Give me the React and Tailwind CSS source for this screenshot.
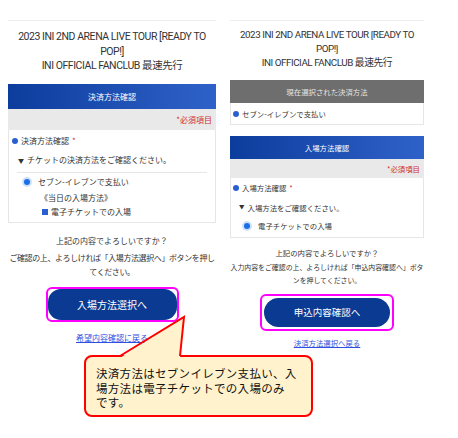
const jp = { fontFamily: '"Noto Sans CJK JP", "Noto Sans", sans-serif' };

const Dot = ({ size = "w-[6px] h-[6px]" }) => (
  <span className={`inline-block ${size} rounded-full bg-[#2a5fd0] shrink-0`} />
);

const Radio = () => (
  <span className="flex items-center justify-center w-[10px] h-[10px] rounded-full bg-[#cfe1fa] shrink-0">
    <span className="w-[6px] h-[6px] rounded-full bg-[#1a6fe6]" />
  </span>
);

const Title = ({ className }) => (
  <div
    className={`text-center text-[#333] ${className}`}
    style={{ fontFamily: 'Roboto, "Noto Sans CJK JP", sans-serif' }}
  >
    <div>2023 INI 2ND ARENA LIVE TOUR [READY TO</div>
    <div>POP!]</div>
    <div>INI OFFICIAL FANCLUB 最速先行</div>
  </div>
);

const BlueHeader = ({ label, className }) => (
  <div
    className={`flex items-center justify-center bg-gradient-to-r from-[#0c3c9c] to-[#2f62c9] text-white ${className}`}
  >
    {label}
  </div>
);

const LeftColumn = () => (
  <div className="ml-[8px] w-[208px] pt-[20px] text-[8px] text-[#333]" style={jp}>
    <div className="h-px bg-[#eeeeee]" />
    <Title className="h-[63px] pt-[9px] text-[10.5px] leading-[14.5px] tracking-[-0.45px]" />
    <BlueHeader label="決済方法確認" className="h-[25px] text-[8px]" />
    <div className="h-[21px] bg-[#e9e9e9] flex items-center justify-end pr-[4px] text-[#d0302c]">
      *必須項目
    </div>
    <div className="border-x border-b border-[#e6e6e6] pb-[3px]">
      <div className="h-[22px] flex items-center gap-[3px] pl-[3px]">
        <Dot />
        <span>決済方法確認</span>
        <span className="text-[#d0302c]">*</span>
      </div>
      <div className="h-[16px] flex items-center gap-[3px] pl-[9px]">
        <span className="text-[6px]">▼</span>
        <span>チケットの決済方法をご確認ください。</span>
      </div>
      <div className="mt-[4px] mx-[8px] h-px bg-[#e6e6e6]" />
      <div className="h-[18px] flex items-center gap-[6px] pl-[13px]">
        <Radio />
        <span>セブン-イレブンで支払い</span>
      </div>
      <div className="h-[14px] flex items-center pl-[31px]">《当日の入場方法》</div>
      <div className="h-[14px] flex items-center gap-[3px] pl-[33px]">
        <span className="w-[6px] h-[6px] bg-[#2a5fd0]" />
        <span>電子チケットでの入場</span>
      </div>
    </div>
    <p className="mt-[12px] text-center leading-[12px]">上記の内容でよろしいですか？</p>
    <p className="mt-[4px] text-center leading-[13.5px] tracking-[-0.4px]">
      ご確認の上、よろしければ「入場方法選択へ」ボタンを押してください。
    </p>
    <div className="mt-[9px] mx-auto w-[133px] h-[35px] border-2 border-[#ff00ff] rounded-[6px] bg-white">
      <div className="h-full rounded-[13px] bg-[#0b3a92] flex items-center justify-center text-white text-[10px]">
        入場方法選択へ
      </div>
    </div>
    <div className="mt-[10px] text-center leading-[12px]">
      <span className="text-[#2f4fe0] underline">希望内容確認に戻る</span>
    </div>
  </div>
);

const RightColumn = () => (
  <div className="ml-[14px] w-[194px] pt-[20px] text-[7.4px] text-[#333]" style={jp}>
    <div className="h-px bg-[#eeeeee]" />
    <Title className="h-[59px] pt-[7px] text-[9.8px] leading-[14px] tracking-[-0.45px]" />
    <div className="h-[23px] bg-[#6e6e6e] flex items-center justify-center text-[#e4e4e4]">
      現在選択された決済方法
    </div>
    <div className="h-[22px] border-x border-b border-[#e6e6e6] flex items-center gap-[3px] pl-[2px]">
      <Dot />
      <span>セブン-イレブンで支払い</span>
    </div>
    <BlueHeader label="入場方法確認" className="mt-[11px] h-[23px] text-[7.4px]" />
    <div className="h-[19px] bg-[#e9e9e9] flex items-center justify-end pr-[4px] text-[#d0302c]">
      *必須項目
    </div>
    <div className="border-x border-b border-[#e6e6e6] pb-[2px]">
      <div className="h-[20px] flex items-center gap-[3px] pl-[2px]">
        <Dot />
        <span>入場方法確認</span>
        <span className="text-[#d0302c]">*</span>
      </div>
      <div className="h-[19px] flex items-center gap-[3px] pl-[8px]">
        <span className="text-[5.5px]">▼</span>
        <span>入場方法をご確認ください。</span>
      </div>
      <div className="h-[18px] flex items-center gap-[6px] pl-[11px]">
        <Radio />
        <span>電子チケットでの入場</span>
      </div>
    </div>
    <p className="mt-[9px] text-center leading-[12px]">上記の内容でよろしいですか？</p>
    <p className="mt-[2px] text-center text-[6.9px] leading-[13px]">
      入力内容をご確認の上、よろしければ「申込内容確認へ」ボタンを押してください。
    </p>
    <div className="mt-[7px] mx-auto w-[134px] h-[37px] border-2 border-[#ff00ff] rounded-[6px] bg-white p-[2px]">
      <div className="h-full rounded-[15px] bg-[#0b3a92] flex items-center justify-center text-white text-[9.5px]">
        申込内容確認へ
      </div>
    </div>
    <div className="mt-[6px] text-center leading-[12px]">
      <span className="text-[#2f4fe0] underline">決済方法選択へ戻る</span>
    </div>
  </div>
);

const Callout = () => (
  <>
    <div
      className="absolute left-[84px] top-[355px] w-[229px] h-[62px] bg-[#fff2cc] border-2 border-[#ff0000] rounded-[8px] pl-[10px] pt-[9px] text-[11.5px] leading-[14.5px] tracking-[0.3px] text-[#111] whitespace-nowrap"
      style={jp}
    >
      <div>決済方法はセブンイレブン支払い、入</div>
      <div>場方法は電子チケットでの入場のみ</div>
      <div>です。</div>
    </div>
    <svg className="absolute left-[84px] top-[300px]" width="120" height="70" viewBox="0 0 120 70">
      <polygon points="36,58 100,17 96,58" fill="#fff2cc" />
      <polyline
        points="36,56 100,17 96,56"
        fill="none"
        stroke="#ff0000"
        strokeWidth="2"
        strokeLinejoin="miter"
      />
    </svg>
  </>
);

export default function App() {
  return (
    <div className="relative w-[458px] h-[438px] bg-white overflow-hidden">
      <div className="flex items-start">
        <LeftColumn />
        <RightColumn />
      </div>
      <Callout />
    </div>
  );
}
